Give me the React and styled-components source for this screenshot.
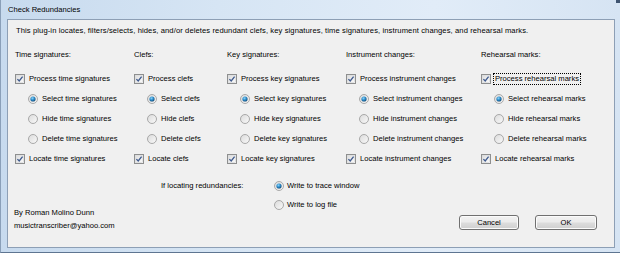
import React from "react";
import styled, { createGlobalStyle } from "styled-components";

const Global = createGlobalStyle`
  html, body { margin: 0; padding: 0; background: #ffffff; }
  body { font-family: "Liberation Sans", Arial, sans-serif; }
  * { box-sizing: border-box; }
`;

const Window = styled.div`
  width: 620px;
  height: 253px;
  display: flex;
  flex-direction: column;
  padding: 0 5px 4px 6px;
  background: linear-gradient(to right, #c7daee 0%, #d6e5f4 35%, #e1ecf8 70%, #d6e4f3 100%);
  border-left: 1px solid #8a9fb8;
  border-bottom: 1px solid #5e7591;
  position: relative;
  overflow: hidden;
`;

const CornerBit = styled.div`
  position: absolute;
  right: 0;
  top: 0;
  width: 4px;
  height: 3px;
  background: #3f5470;
`;

const TitleBar = styled.div`
  height: 19px;
  display: flex;
  align-items: center;
  padding-left: 1px;
  font-size: 7.6px;
  color: #000;
`;

const Client = styled.div`
  flex: 1;
  border: 1px solid #8d9fb5;
  background: #f0f0f0;
  display: flex;
  flex-direction: column;
  font-size: 7.6px;
  color: #000;
`;

const Description = styled.div`
  margin: 6px 0 0 8px;
  height: 10px;
  line-height: 10px;
  white-space: nowrap;
  letter-spacing: 0.1px;
`;

const Columns = styled.div`
  margin-top: 9px;
  display: grid;
  grid-template-columns: 119px 93px 119px 135px 1fr;
  padding-left: 7px;
`;

const Column = styled.div`
  display: flex;
  flex-direction: column;
`;

const Header = styled.div`
  height: 20px;
  line-height: 20px;
  margin-bottom: 4px;
  white-space: nowrap;
`;

const Row = styled.div`
  height: 20px;
  display: flex;
  align-items: center;
  gap: 2px;
  padding-left: ${(p) => (p.$indent ? "13px" : "0")};
  white-space: nowrap;
`;

const Label = styled.span`
  line-height: 10px;
  padding: 0 1px;
  border: 1px dotted ${(p) => (p.$focus ? "#000" : "transparent")};
`;

const Bottom = styled.div`
  flex: 1;
  display: flex;
  padding: 7px 17px 0 6px;
`;

const Author = styled.div`
  width: 147px;
  align-self: flex-end;
  margin-bottom: 15px;
  line-height: 13px;
  white-space: nowrap;
`;

const LocLabel = styled.div`
  width: 113px;
  height: 19px;
  line-height: 19px;
  white-space: nowrap;
`;

const RadioGroup = styled.div`
  flex: 1;
  display: flex;
  flex-direction: column;
`;

const GroupRow = styled.div`
  height: 19px;
  display: flex;
  align-items: center;
  gap: 1px;
  white-space: nowrap;
`;

const Buttons = styled.div`
  display: flex;
  gap: 16px;
  align-self: flex-end;
  margin-bottom: 17px;
`;

const Button = styled.button`
  width: ${(p) => p.$w}px;
  height: 15px;
  padding: 0;
  font-family: "Liberation Sans", Arial, sans-serif;
  font-size: 7.6px;
  color: #000;
  border: 1px solid #707070;
  border-radius: 3px;
  background: linear-gradient(#f2f2f2 0%, #ebebeb 48%, #dddddd 52%, #cfcfcf 100%);
  box-shadow: inset 0 0 0 1px #fbfbfb;
`;

const Box = styled.svg`
  flex: none;
  display: block;
`;

function Checkbox() {
  return (
    <Box width="10" height="10" viewBox="0 0 10 10">
      <defs>
        <linearGradient id="cbg" x1="0" y1="0" x2="1" y2="1">
          <stop offset="0" stopColor="#dcdcdc" />
          <stop offset="1" stopColor="#fbfbfb" />
        </linearGradient>
      </defs>
      <rect x="0.5" y="0.5" width="9" height="9" fill="#fff" stroke="#8e8f8f" />
      <rect x="1.5" y="1.5" width="7" height="7" fill="url(#cbg)" stroke="#d2d4d6" strokeWidth="0.6" />
      <path d="M2.4 5.1 L4.2 7 L7.6 2.6" fill="none" stroke="#3e5a8e" strokeWidth="1.3" />
    </Box>
  );
}

function Radio({ on }) {
  return (
    <Box width="10" height="10" viewBox="0 0 10 10">
      <defs>
        <linearGradient id="rbg" x1="0" y1="0" x2="1" y2="1">
          <stop offset="0" stopColor="#dadada" />
          <stop offset="1" stopColor="#fafafa" />
        </linearGradient>
        <radialGradient id="rdot" cx="0.4" cy="0.35" r="0.7">
          <stop offset="0" stopColor="#8fd4f7" />
          <stop offset="0.5" stopColor="#2a8ccc" />
          <stop offset="1" stopColor="#16476f" />
        </radialGradient>
      </defs>
      <circle cx="5" cy="5" r="4.5" fill="url(#rbg)" stroke="#a0a0a0" strokeWidth="0.9" />
      {on && <circle cx="5" cy="5" r="2.6" fill="url(#rdot)" />}
    </Box>
  );
}

const columns = [
  { head: "Time signatures:", noun: "time signatures" },
  { head: "Clefs:", noun: "clefs" },
  { head: "Key signatures:", noun: "key signatures" },
  { head: "Instrument changes:", noun: "instrument changes" },
  { head: "Rehearsal marks:", noun: "rehearsal marks", focus: true },
];

export default function App() {
  return (
    <>
      <Global />
      <Window>
        <CornerBit />
        <TitleBar>Check Redundancies</TitleBar>
        <Client>
          <Description>
            This plug-in locates, filters/selects, hides, and/or deletes redundant clefs, key signatures, time signatures, instrument changes, and rehearsal marks.
          </Description>
          <Columns>
            {columns.map((c) => (
              <Column key={c.head}>
                <Header>{c.head}</Header>
                <Row>
                  <Checkbox />
                  <Label $focus={c.focus}>Process {c.noun}</Label>
                </Row>
                <Row $indent>
                  <Radio on />
                  <Label>Select {c.noun}</Label>
                </Row>
                <Row $indent>
                  <Radio />
                  <Label>Hide {c.noun}</Label>
                </Row>
                <Row $indent>
                  <Radio />
                  <Label>Delete {c.noun}</Label>
                </Row>
                <Row>
                  <Checkbox />
                  <Label>Locate {c.noun}</Label>
                </Row>
              </Column>
            ))}
          </Columns>
          <Bottom>
            <Author>
              <div>By Roman Molino Dunn</div>
              <div>musictranscriber@yahoo.com</div>
            </Author>
            <LocLabel>If locating redundancies:</LocLabel>
            <RadioGroup>
              <GroupRow>
                <Radio on />
                <Label>Write to trace window</Label>
              </GroupRow>
              <GroupRow>
                <Radio />
                <Label>Write to log file</Label>
              </GroupRow>
            </RadioGroup>
            <Buttons>
              <Button $w={60}>Cancel</Button>
              <Button $w={62}>OK</Button>
            </Buttons>
          </Bottom>
        </Client>
      </Window>
    </>
  );
}
